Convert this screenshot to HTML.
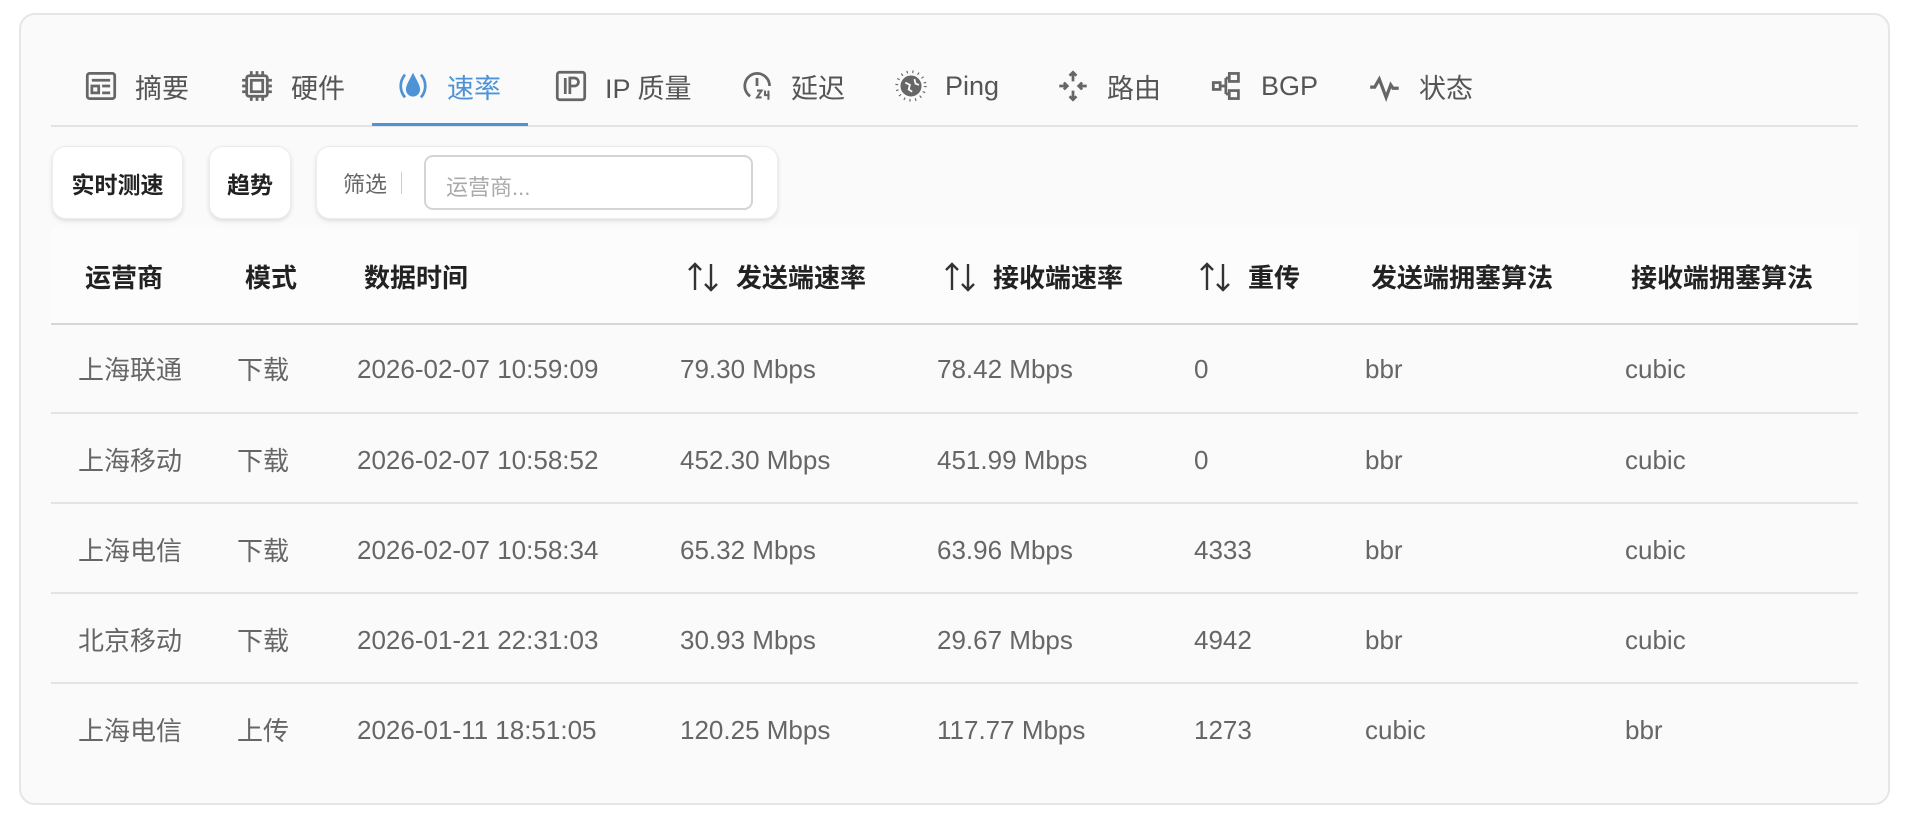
<!DOCTYPE html>
<html><head><meta charset="utf-8"><style>
*{margin:0;padding:0;box-sizing:border-box}
body{width:1908px;height:826px;background:#fff;font-family:"Liberation Sans","Noto Sans CJK SC",sans-serif;position:relative;overflow:hidden}
.card{position:absolute;left:19px;top:13px;width:1871px;height:792px;background:#fafafa;border:2px solid #e6e6e6;border-radius:16px}
.a{position:absolute;white-space:nowrap}
.tab{position:absolute;top:70px;height:32px;display:flex;align-items:center;font-size:27px;color:#555}
.tab svg{width:32px;height:32px;margin-right:18px;fill:none;stroke:#666;stroke-width:2.4}
.line{position:absolute;height:2px;background:#e3e3e3}
.btn{position:absolute;top:146px;height:73px;background:#fff;border:1px solid #ececec;border-radius:14px;box-shadow:0 2px 4px rgba(0,0,0,.12);font-size:23px;font-weight:bold;color:#222;display:flex;align-items:center;justify-content:center}
.h{position:absolute;top:258px;font-size:26px;font-weight:bold;color:#222;display:flex;align-items:center}
.h svg{width:34px;height:32px;margin-right:16px;fill:none;stroke:#333;stroke-width:2.4}
.d{position:absolute;font-size:26px;color:#666}
.c{margin-top:-3px}
.l{margin-top:1px}
</style></head><body>
<div class="card"></div>

<div class="tab" style="left:85px"><svg viewBox="0 0 28 28"><rect x="2" y="3" width="24" height="22" rx="2"/><path d="M6 9h16M6 14h6v6H6zM15 14h7M15 20h7"/></svg>摘要</div>
<div class="tab" style="left:241px"><svg viewBox="0 0 28 28"><rect x="5" y="5" width="18" height="18" rx="2"/><rect x="9" y="9" width="10" height="10"/><path d="M9 1v4M14 1v4M19 1v4M9 23v4M14 23v4M19 23v4M1 9h4M1 14h4M1 19h4M23 9h4M23 14h4M23 19h4"/></svg>硬件</div>
<div class="tab" style="left:397px;color:#4d93d6"><svg viewBox="0 0 28 28" style="stroke:#4d93d6"><path d="M7 4C2 10 2 18 7 24M21 4c5 6 5 14 0 20"/><path d="M14 5c-3 6-5 9-5 12a5 5 0 0010 0c0-3-2-6-5-12z" fill="#4d93d6"/></svg>速率</div>
<div class="tab" style="left:555px"><svg viewBox="0 0 28 28"><rect x="2" y="2" width="24" height="24" rx="2"/><path d="M9 7v14M13 21V7h4a3.5 3.5 0 010 7h-4"/></svg>IP 质量</div>
<div class="tab" style="left:741px"><svg viewBox="0 0 28 28"><path d="M14 3a11 11 0 00-6 20M14 3a11 11 0 0111 11M14 7v7"/><path d="M14 18h4l-4 6h4M21 18v4h4M24 18v8" stroke-width="1.8"/></svg>延迟</div>
<div class="tab" style="left:895px"><svg viewBox="0 0 28 28"><circle cx="14" cy="14" r="8" fill="#666"/><path d="M9 11l4 2-1 4 3 2M17 8l1 4 3 1" stroke="#fafafa" stroke-width="1.6"/><g stroke-dasharray="1 4" stroke-width="2.4"><circle cx="14" cy="14" r="12.5"/></g></svg>Ping</div>
<div class="tab" style="left:1057px"><svg viewBox="0 0 28 28"><path d="M14 2v8M11 5l3-3 3 3M14 26v-8M11 23l3 3 3-3M2 14h7M6 11l3 3-3 3M26 14h-7M22 11l-3 3 3 3"/></svg>路由</div>
<div class="tab" style="left:1211px"><svg viewBox="0 0 28 28"><rect x="2" y="11" width="6" height="6"/><rect x="16" y="3" width="8" height="7"/><rect x="16" y="18" width="8" height="7"/><path d="M8 14h5M13 7v14M13 7h3M13 21h3"/></svg>BGP</div>
<div class="tab" style="left:1369px"><svg viewBox="0 0 28 28" style="stroke-width:2.8"><path d="M1 15h4l4-7 6 16 4-11 2 3h5"/></svg>状态</div>

<div class="line" style="left:51px;top:125px;width:1807px"></div>
<div class="a" style="left:372px;top:123px;width:156px;height:3px;background:#4d93d6"></div>

<div class="btn" style="left:52px;width:131px">实时测速</div>
<div class="btn" style="left:209px;width:82px">趋势</div>
<div class="btn" style="left:316px;width:462px;justify-content:flex-start;font-weight:normal;color:#666;padding-left:26px;font-size:22px">筛选<span style="display:inline-block;width:1px;height:22px;background:#ccc;margin:0 17px 0 14px"></span>
<div style="position:absolute;left:107px;top:8px;width:329px;height:55px;border:2px solid #d4d4d4;border-radius:9px;color:#aaa;font-size:22px;padding:13px 0 0 20px">运营商...</div></div>

<div class="a" style="left:51px;top:228px;width:1807px;height:96px;background:#fcfcfc"></div>
<div class="h" style="left:85px">运营商</div>
<div class="h" style="left:245px">模式</div>
<div class="h" style="left:364px">数据时间</div>
<div class="h" style="left:686px"><svg viewBox="0 0 34 32"><path d="M9 29V3M3 9l6-6 6 6M25 3v26M19 23l6 6 6-6"/></svg>发送端速率</div>
<div class="h" style="left:943px"><svg viewBox="0 0 34 32"><path d="M9 29V3M3 9l6-6 6 6M25 3v26M19 23l6 6 6-6"/></svg>接收端速率</div>
<div class="h" style="left:1198px"><svg viewBox="0 0 34 32"><path d="M9 29V3M3 9l6-6 6 6M25 3v26M19 23l6 6 6-6"/></svg>重传</div>
<div class="h" style="left:1371px">发送端拥塞算法</div>
<div class="h" style="left:1631px">接收端拥塞算法</div>

<div class="line" style="left:51px;top:323px;width:1807px;background:#d6d6d6"></div>
<div class="line" style="left:51px;top:412px;width:1807px"></div>
<div class="line" style="left:51px;top:502px;width:1807px"></div>
<div class="line" style="left:51px;top:592px;width:1807px"></div>
<div class="line" style="left:51px;top:682px;width:1807px"></div>

<div class="d c" style="left:78px;top:353px">上海联通</div><div class="d c" style="left:237px;top:353px">下载</div><div class="d l" style="left:357px;top:353px">2026-02-07 10:59:09</div><div class="d l" style="left:680px;top:353px">79.30 Mbps</div><div class="d l" style="left:937px;top:353px">78.42 Mbps</div><div class="d l" style="left:1194px;top:353px">0</div><div class="d l" style="left:1365px;top:353px">bbr</div><div class="d l" style="left:1625px;top:353px">cubic</div>
<div class="d c" style="left:78px;top:444px">上海移动</div><div class="d c" style="left:237px;top:444px">下载</div><div class="d l" style="left:357px;top:444px">2026-02-07 10:58:52</div><div class="d l" style="left:680px;top:444px">452.30 Mbps</div><div class="d l" style="left:937px;top:444px">451.99 Mbps</div><div class="d l" style="left:1194px;top:444px">0</div><div class="d l" style="left:1365px;top:444px">bbr</div><div class="d l" style="left:1625px;top:444px">cubic</div>
<div class="d c" style="left:78px;top:534px">上海电信</div><div class="d c" style="left:237px;top:534px">下载</div><div class="d l" style="left:357px;top:534px">2026-02-07 10:58:34</div><div class="d l" style="left:680px;top:534px">65.32 Mbps</div><div class="d l" style="left:937px;top:534px">63.96 Mbps</div><div class="d l" style="left:1194px;top:534px">4333</div><div class="d l" style="left:1365px;top:534px">bbr</div><div class="d l" style="left:1625px;top:534px">cubic</div>
<div class="d c" style="left:78px;top:624px">北京移动</div><div class="d c" style="left:237px;top:624px">下载</div><div class="d l" style="left:357px;top:624px">2026-01-21 22:31:03</div><div class="d l" style="left:680px;top:624px">30.93 Mbps</div><div class="d l" style="left:937px;top:624px">29.67 Mbps</div><div class="d l" style="left:1194px;top:624px">4942</div><div class="d l" style="left:1365px;top:624px">bbr</div><div class="d l" style="left:1625px;top:624px">cubic</div>
<div class="d c" style="left:78px;top:714px">上海电信</div><div class="d c" style="left:237px;top:714px">上传</div><div class="d l" style="left:357px;top:714px">2026-01-11 18:51:05</div><div class="d l" style="left:680px;top:714px">120.25 Mbps</div><div class="d l" style="left:937px;top:714px">117.77 Mbps</div><div class="d l" style="left:1194px;top:714px">1273</div><div class="d l" style="left:1365px;top:714px">cubic</div><div class="d l" style="left:1625px;top:714px">bbr</div>
</body></html>
